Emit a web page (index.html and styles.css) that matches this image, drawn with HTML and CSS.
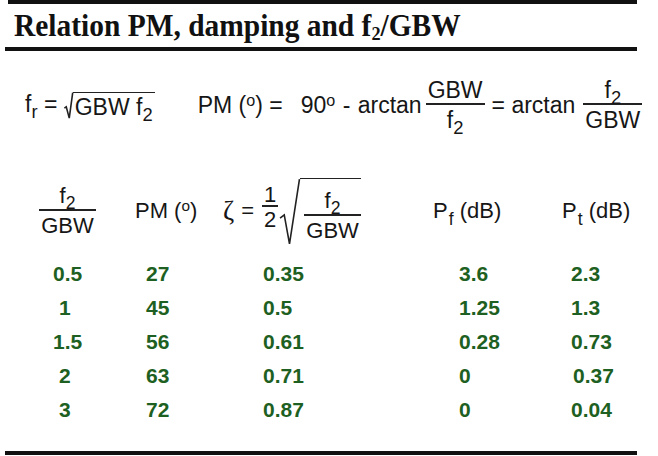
FILE: index.html
```html
<!DOCTYPE html>
<html>
<head>
<meta charset="utf-8">
<link rel="stylesheet" href="styles.css">
</head>
<body>
<div class="page">
  <div class="rule rule-top"></div>
  <div class="title"><span class="title-text">Relation PM, damping and f<sub class="tsub">2</sub>/GBW</span></div>
  <div class="rule"></div>

  <div class="formula">
    <span class="item item-fr">f<sub>r</sub> = <span class="sqrt"><svg class="rad-sign" viewBox="0 0 12 30" preserveAspectRatio="none"><path d="M0.5 18 L3 16.5 L7 29 L11.6 0.8" /></svg><span class="rad">GBW f<sub>2</sub></span></span></span>
    <span class="item item-pm">PM (<sup>o</sup>) =</span>
    <span class="item item-90">90<sup>o</sup> - arctan</span>
    <span class="frac f-a"><span class="num">GBW</span><span class="den">f<sub>2</sub></span></span>
    <span class="item item-eq">= arctan</span>
    <span class="frac f-b"><span class="num">f<sub>2</sub></span><span class="den">GBW</span></span>
  </div>

  <div class="table">
    <div class="th c1"><span class="frac"><span class="num">f<sub>2</sub></span><span class="den">GBW</span></span></div>
    <div class="th c2"><span>PM (<sup>o</sup>)</span></div>
    <div class="th c3"><span class="zeta">ζ</span><span class="eq">=</span><span class="frac small"><span class="num">1</span><span class="den">2</span></span><span class="sqrt big"><svg class="rad-sign" viewBox="0 0 20 60" preserveAspectRatio="none"><path d="M1 36 L5 33 L10 59 L19.5 1" /></svg><span class="rad"><span class="frac"><span class="num">f<sub>2</sub></span><span class="den">GBW</span></span></span></span></div>
    <div class="th c4"><span>P<sub>f</sub> (dB)</span></div>
    <div class="th c5"><span>P<sub>t</sub> (dB)</span></div>

    <div class="td c1">0.5</div><div class="td c2">27</div><div class="td c3">0.35</div><div class="td c4">3.6</div><div class="td c5">2.3</div>
    <div class="td c1 ind">1</div><div class="td c2">45</div><div class="td c3">0.5</div><div class="td c4">1.25</div><div class="td c5">1.3</div>
    <div class="td c1">1.5</div><div class="td c2">56</div><div class="td c3">0.61</div><div class="td c4">0.28</div><div class="td c5">0.73</div>
    <div class="td c1 ind">2</div><div class="td c2">63</div><div class="td c3">0.71</div><div class="td c4">0</div><div class="td c5 shift">0.37</div>
    <div class="td c1 ind">3</div><div class="td c2">72</div><div class="td c3">0.87</div><div class="td c4">0</div><div class="td c5">0.04</div>
  </div>

  <div class="rule rule-bottom"></div>
</div>
</body>
</html>
```

FILE: styles.css
```css
html, body {
  margin: 0;
  padding: 0;
  background: #ffffff;
}

body {
  font-family: "Liberation Sans", Arial, sans-serif;
  color: #161616;
  width: 658px;
  height: 456px;
  overflow: hidden;
}

.page {
  width: 632px;
  margin-left: 5px;
  height: 456px;
}

.rule {
  height: 4px;
  background: #111111;
}

.rule-top {
  margin-left: 3px;
}

.title {
  height: 43px;
  padding-left: 9px;
  font-family: "Liberation Serif", "Times New Roman", serif;
  font-weight: bold;
  font-size: 32px;
  line-height: 43px;
  white-space: nowrap;
  color: #111111;
}

.title-text {
  display: inline-block;
  transform: scaleX(0.92);
  transform-origin: left center;
}

.tsub {
  font-size: 0.62em;
  vertical-align: -0.18em;
  line-height: 0;
}

sub {
  font-size: 0.8em;
  vertical-align: -0.32em;
  line-height: 0;
}

sup {
  font-size: 0.7em;
  vertical-align: 0.45em;
  line-height: 0;
}

/* formula line */
.formula {
  box-sizing: border-box;
  height: 134px;
  padding: 0 0 26px 20px;
  display: flex;
  align-items: center;
  font-size: 23px;
  white-space: nowrap;
}

.item-pm {
  margin-left: 43px;
}

.item-90 {
  margin-left: 18px;
  word-spacing: 1px;
}

.item-eq {
  margin-left: 7px;
}

.f-a {
  margin-left: 4px;
}

.f-b {
  margin-left: 8px;
}

.frac {
  display: inline-flex;
  flex-direction: column;
  align-items: stretch;
  text-align: center;
}

.frac .num {
  border-bottom: 2px solid #222222;
  padding: 0 2px 1px;
  line-height: 24px;
}

.frac .den {
  padding: 3px 2px 0;
  line-height: 24px;
}

.sqrt {
  display: inline-flex;
  align-items: stretch;
  vertical-align: middle;
}

.rad-sign {
  width: 9px;
  height: auto;
  flex: none;
  overflow: visible;
}

.rad-sign path {
  fill: none;
  stroke: #222222;
  stroke-width: 1.6;
  stroke-linejoin: miter;
  vector-effect: non-scaling-stroke;
}

.rad {
  border-top: 1.6px solid #222222;
  padding: 2px 2px 0 2px;
  line-height: 24px;
}

/* table */
.table {
  display: grid;
  grid-template-columns: 125px 90px 210px 125px 82px;
  grid-template-rows: 72px repeat(5, 34px);
  font-size: 22px;
  white-space: nowrap;
}

.th {
  box-sizing: border-box;
  display: flex;
  align-items: center;
  align-self: start;
  height: 55px;
  padding-bottom: 3px;
}

.th.c1 { justify-content: center; }
.th.c2 { padding-left: 5px; }
.th.c3 { padding-left: 3px; }
.th.c4 { padding-left: 3px; }
.th.c5 { padding-left: 7px; }

.th.c4 sub, .th.c5 sub {
  font-size: 0.8em;
  vertical-align: -0.4em;
  margin: 0 0 0 1px;
}

.zeta {
  font-family: "Liberation Serif", "Times New Roman", serif;
  font-size: 27px;
  margin-right: 2px;
}

.eq {
  margin: 0 8px 0 5px;
}

.frac.small {
  margin-bottom: 8px;
}

.frac.small .num,
.frac.small .den {
  padding: 0 2px;
  line-height: 21px;
}

.frac.small .den {
  padding-top: 2px;
}

.sqrt.big {
  margin-left: 1px;
}

.sqrt.big .rad-sign {
  width: 21px;
}

.sqrt.big .rad {
  padding: 9px 0 2px 4px;
  line-height: normal;
}

.td {
  display: flex;
  align-items: center;
  font-size: 21px;
  font-weight: bold;
  color: #1e5f22;
}

.td.c1 { padding-left: 48px; }
.td.c1.ind { padding-left: 54px; }
.td.c2 { padding-left: 16px; }
.td.c3 { padding-left: 43px; }
.td.c4 { padding-left: 29px; }
.td.c5 { padding-left: 16px; }
.td.c5.shift { padding-left: 18px; }

.rule-bottom {
  margin-top: 24px;
}
```
